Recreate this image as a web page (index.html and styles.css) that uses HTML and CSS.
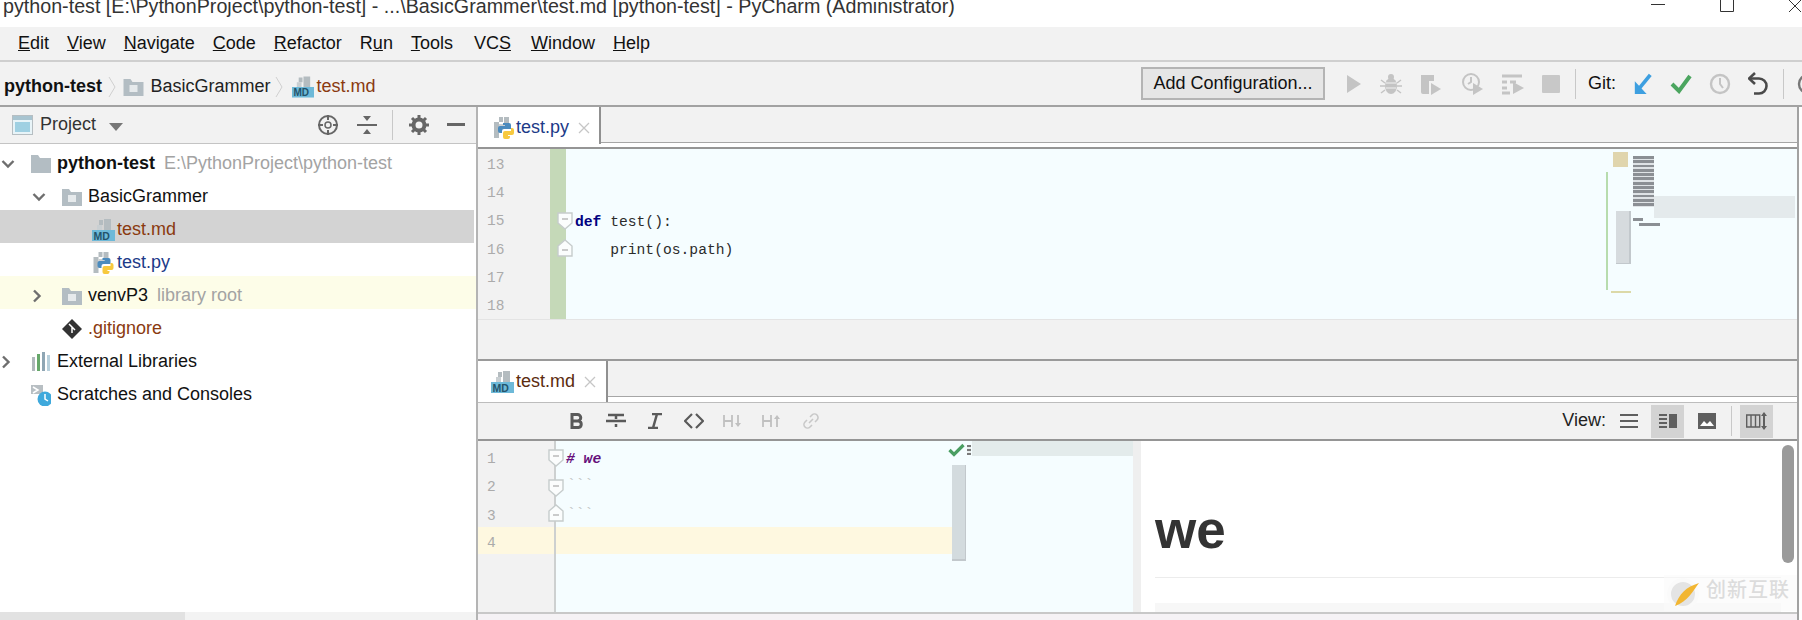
FILE: index.html
```html
<!DOCTYPE html>
<html lang="en">
<head>
<meta charset="utf-8">
<title>PyCharm</title>
<link rel="stylesheet" href="styles.css">
</head>
<body>
<svg class="defs" width="0" height="0">
  <symbol id="folder" viewBox="0 0 20 18"><path d="M0 1h7l2 3h11v14H0z" fill="#b3bdc3"/><rect x="6" y="7" width="8" height="7" fill="#e6eaec"/></symbol>
  <symbol id="folder-plain" viewBox="0 0 20 18"><path d="M0 0h7l2 3h11v15H0z" fill="#b3bdc3"/></symbol>
  <symbol id="md" viewBox="0 0 23 22"><path d="M7 1h4v5H7zM12 0h7v11h-7z" fill="#b4bcc0"/><path d="M5 6h5v5H5z" fill="#c9cfd2"/><rect y="11" width="23" height="11" fill="#6db9d8"/><text x="1.500" y="20.500" class="md-label">MD</text></symbol>
  <symbol id="py" viewBox="0 0 20 22"><path d="M5 0h4v5H5zM10 0h5v7h-5zM0 5h5v16H0z" fill="#b4bcc0"/><path d="M5 7h6v4H5z" fill="#c9cfd2"/><path d="M9 6h6a2 2 0 0 1 2 2v4h-7a2 2 0 0 0-2 2v2H6a2 2 0 0 1-2-2v-3a2 2 0 0 1 2-2h5V8H9z" fill="#4b8bbe"/><path d="M17 11h1a2 2 0 0 1 2 2v3a2 2 0 0 1-2 2h-4v1h2v1a2 2 0 0 1-2 2h-3a2 2 0 0 1-2-2v-4a2 2 0 0 1 2-2h6z" fill="#f7c93e"/></symbol>
  <symbol id="chev-d" viewBox="0 0 14 10"><path d="M1.500 2l5.500 5.500L12.500 2" fill="none" stroke="#6e6e6e" stroke-width="2.400"/></symbol>
  <symbol id="chev-r" viewBox="0 0 10 14"><path d="M2 1.500L7.500 7 2 12.500" fill="none" stroke="#6e6e6e" stroke-width="2.400"/></symbol>
  <symbol id="fold-open" viewBox="0 0 16 18"><path d="M1 1h14v10l-7 6-7-6z" fill="#fbfdfd" stroke="#c6cccc" stroke-width="1.400"/><path d="M5 7h6" stroke="#b5b5b5" stroke-width="1.400"/></symbol>
  <symbol id="fold-close" viewBox="0 0 16 18"><path d="M1 17h14V7L8 1 1 7z" fill="#fbfdfd" stroke="#c6cccc" stroke-width="1.400"/><path d="M5 11h6" stroke="#b5b5b5" stroke-width="1.400"/></symbol>
</svg>

<header class="titlebar">
  <span class="title-text">python-test [E:\PythonProject\python-test] - ...\BasicGrammer\test.md [python-test] - PyCharm (Administrator)</span>
  <div class="winbtns">
    <svg width="14" height="12" viewBox="0 0 14 12"><path d="M0 4.500h14" stroke="#333" stroke-width="1"/></svg>
    <svg width="14" height="12" viewBox="0 0 14 12"><path d="M.5 0v11.500h13V0" fill="none" stroke="#333"/></svg>
    <svg width="14" height="12" viewBox="0 0 14 12"><path d="M0 0l12 12M12 0L0 12" stroke="#333"/></svg>
  </div>
</header>

<nav class="menubar">
  <span><u>E</u>dit</span><span><u>V</u>iew</span><span><u>N</u>avigate</span><span><u>C</u>ode</span><span><u>R</u>efactor</span><span>R<u>u</u>n</span><span><u>T</u>ools</span><span class="m-vcs">VC<u>S</u></span><span><u>W</u>indow</span><span><u>H</u>elp</span>
</nav>

<div class="navbar">
  <div class="crumbs">
    <b>python-test</b>
    <svg class="crumb-sep" width="8" height="22" viewBox="0 0 8 22"><path d="M1 1l6 10-6 10" fill="none" stroke="#d0d0d0"/></svg>
    <svg class="ic20" width="21" height="18"><use href="#folder"/></svg>
    <span class="crumb-name">BasicGrammer</span>
    <svg class="crumb-sep s2" width="8" height="22" viewBox="0 0 8 22"><path d="M1 1l6 10-6 10" fill="none" stroke="#d0d0d0"/></svg>
    <svg class="crumb-file" width="22" height="22"><use href="#md"/></svg>
    <span class="vcs-ignored">test.md</span>
  </div>
  <div class="run-tools">
    <button class="config">Add Configuration...</button>
    <svg class="rt" width="18" height="22" viewBox="0 0 18 22"><path d="M2 2l14 9-14 9z" fill="#c4c4c4"/></svg>
    <svg class="rt" width="22" height="22" viewBox="0 0 22 22"><ellipse cx="11" cy="13" rx="6" ry="8" fill="#c4c4c4"/><circle cx="11" cy="4" r="3" fill="#c4c4c4"/><path d="M1 7l4 3M21 7l-4 3M0 13h5M22 13h-5M1 20l4-3M21 20l-4-3" stroke="#c4c4c4" stroke-width="1.500"/><path d="M6 10h10M6 15h10" stroke="#f2f2f2" stroke-width="1.200"/></svg>
    <svg class="rt" width="24" height="22" viewBox="0 0 24 22"><path d="M2 2h13v6h-5v13H4a2 2 0 0 1-2-2z" fill="#c4c4c4"/><path d="M12 10l10 6-10 6z" fill="#c4c4c4"/></svg>
    <svg class="rt" width="24" height="24" viewBox="0 0 24 24"><circle cx="11" cy="10" r="8" fill="none" stroke="#c4c4c4" stroke-width="2"/><path d="M11 5v5l-3 2" fill="none" stroke="#c4c4c4" stroke-width="2"/><path d="M13 11l10 6-10 6z" fill="#c4c4c4"/></svg>
    <svg class="rt" width="24" height="22" viewBox="0 0 24 22"><path d="M1 3h20M1 9h5M9 9h6M1 15h5M1 20h8" stroke="#c4c4c4" stroke-width="3"/><path d="M12 9l11 6-11 6z" fill="#c4c4c4"/></svg>
    <svg class="rt" width="18" height="18" viewBox="0 0 18 18"><rect width="18" height="18" rx="1" fill="#c8c8c8"/></svg>
    <i class="vsep"></i>
    <span class="git-label">Git:</span>
    <svg class="rt" width="20" height="22" viewBox="0 0 22 24"><path d="M19 2L6 18" stroke="#3d9fe0" stroke-width="4"/><path d="M2 9v14h13z" fill="#3d9fe0"/></svg>
    <svg class="rt" width="22" height="20" viewBox="0 0 22 20"><path d="M2 10l7 7L20 2" fill="none" stroke="#4ba55f" stroke-width="4"/></svg>
    <svg class="rt" width="22" height="22" viewBox="0 0 22 22"><circle cx="11" cy="11" r="9" fill="none" stroke="#c4c4c4" stroke-width="2.400"/><path d="M11 5v6l3 4" fill="none" stroke="#c4c4c4" stroke-width="2"/></svg>
    <svg class="rt" width="20" height="24" viewBox="0 0 20 24"><path d="M7 1L1 6.500 7 12" fill="none" stroke="#4a4a4a" stroke-width="2.600"/><path d="M2 6.500h9a7 7 0 0 1 0 15H6" fill="none" stroke="#4a4a4a" stroke-width="2.600"/></svg>
    <i class="vsep"></i>
    <svg class="rt" width="14" height="24" viewBox="0 0 14 24"><circle cx="12" cy="12" r="9" fill="none" stroke="#777" stroke-width="2.400"/></svg>
  </div>
</div>

<main class="workspace">
  <aside class="project">
    <div class="project-head">
      <svg class="proj-ic" width="21" height="20" viewBox="0 0 21 20"><rect x=".5" y=".5" width="20" height="19" fill="#e8f4f8" stroke="#b6bec2"/><rect x="1" y="1" width="19" height="4" fill="#a8c4d0"/><rect x="3" y="7" width="15" height="10" fill="#9fd0e2"/></svg>
      <span class="proj-label">Project</span>
      <svg class="proj-arrow" width="14" height="8" viewBox="0 0 14 8"><path d="M0 0h14L7 8z" fill="#777"/></svg>
      <div class="head-tools">
        <svg width="22" height="22" viewBox="0 0 22 22"><circle cx="11" cy="11" r="9" fill="none" stroke="#666" stroke-width="2"/><circle cx="11" cy="11" r="3" fill="none" stroke="#666" stroke-width="1.500"/><path d="M11 1v5M11 16v5M1 11h5M16 11h5" stroke="#666" stroke-width="2"/></svg>
        <svg width="20" height="22" viewBox="0 0 20 22"><path d="M0 11h20" stroke="#666" stroke-width="2"/><path d="M6 2h8l-4 5zM6 20h8l-4-5z" fill="#666"/></svg>
        <i class="vsep short"></i>
        <svg width="20" height="20" viewBox="0 0 20 20"><circle cx="10" cy="10" r="5.500" fill="none" stroke="#666" stroke-width="4"/><path d="M10 0v4M10 16v4M0 10h4M16 10h4M3 3l3 3M14 14l3 3M17 3l-3 3M6 14l-3 3" stroke="#666" stroke-width="3"/></svg>
        <svg width="18" height="4" viewBox="0 0 18 4"><rect width="18" height="3" fill="#666"/></svg>
      </div>
    </div>
    <div class="tree">
      <div class="row"><svg class="chev" width="14" height="10"><use href="#chev-d"/></svg><svg class="ic" width="20" height="18"><use href="#folder-plain"/></svg><b>python-test</b><span class="hint">E:\PythonProject\python-test</span></div>
      <div class="row d1"><svg class="chev" width="14" height="10"><use href="#chev-d"/></svg><svg class="ic" width="20" height="18"><use href="#folder"/></svg><span>BasicGrammer</span></div>
      <div class="row d2 selected"><svg class="ic-file" width="23" height="22"><use href="#md"/></svg><span class="vcs-ignored">test.md</span></div>
      <div class="row d2"><svg class="ic-file" width="23" height="22"><use href="#py"/></svg><span class="vcs-py">test.py</span></div>
      <div class="row d1 lib"><svg class="chev chev-r" width="10" height="14"><use href="#chev-r"/></svg><svg class="ic" width="20" height="18"><use href="#folder"/></svg><span>venvP3</span><span class="hint">library root</span></div>
      <div class="row d3"><svg class="ic" width="20" height="20" viewBox="0 0 20 20"><path d="M10 0l10 10-10 10L0 10z" fill="#333"/><path d="M7 5l6 6M10 8v6" stroke="#fff" stroke-width="1.500"/></svg><span class="vcs-ignored">.gitignore</span></div>
      <div class="row"><svg class="chev chev-r" width="10" height="14"><use href="#chev-r"/></svg><svg class="ic" width="20" height="20" viewBox="0 0 20 20"><path d="M1 5h3v14H1z" fill="#b0b8bc"/><path d="M6 2h3v17H6z" fill="#66a86a"/><path d="M11 0h3v19h-3z" fill="#8fa6b4"/><path d="M16 3h3v16h-3z" fill="#b8d0dc"/></svg><span>External Libraries</span></div>
      <div class="row d0"><svg class="ic" width="20" height="22" viewBox="0 0 20 22"><path d="M0 1h12v9H0z" fill="#b8bfc3"/><path d="M2 3l5 3-5 3" fill="none" stroke="#fff" stroke-width="1.500"/><circle cx="14" cy="15" r="7.500" fill="#3fa9dc"/><path d="M14 10v5l3 2" fill="none" stroke="#fff" stroke-width="1.500"/></svg><span>Scratches and Consoles</span></div>
    </div>
    <div class="hscroll"><i></i></div>
  </aside>

  <section class="editors">
    <div class="tabs">
      <div class="tab"><svg class="tab-ic" width="20" height="22"><use href="#py"/></svg><span class="vcs-py">test.py</span><svg class="tab-x" width="12" height="12" viewBox="0 0 12 12"><path d="M1 1l10 10M11 1L1 11" stroke="#c6c6c6" stroke-width="1.300"/></svg></div>
    </div>
    <div class="tab-strip"></div>
    <div class="editor-one">
      <div class="gutter g1">
        <div class="ln">13</div><div class="ln">14</div><div class="ln">15</div><div class="ln">16</div><div class="ln">17</div><div class="ln">18</div>
      </div>
      <div class="change-bar"></div>
      <div class="code c1">
        <div class="ln">&nbsp;</div><div class="ln">&nbsp;</div>
        <div class="ln"><b class="kw">def</b> test():</div>
        <div class="ln">    print(os.path)</div>
      </div>
      <svg class="fold f1" width="16" height="18"><use href="#fold-open"/></svg>
      <svg class="fold f2" width="16" height="18"><use href="#fold-close"/></svg>
      <i class="mm-tan"></i><i class="mm-green"></i><i class="mm-strip"></i><i class="mm-bars"></i><i class="mm-b1"></i><i class="mm-b2"></i><i class="mm-thumb"></i><i class="mm-foot"></i>
    </div>
    <div class="split-gap"></div>

    <div class="tabs second">
      <div class="tab"><svg class="tab-ic" width="23" height="22"><use href="#md"/></svg><span class="vcs-md">test.md</span><svg class="tab-x" width="12" height="12" viewBox="0 0 12 12"><path d="M1 1l10 10M11 1L1 11" stroke="#c6c6c6" stroke-width="1.300"/></svg></div>
    </div>
    <div class="tab-strip second"></div>
    <div class="md-tools">
      <div class="md-format">
        <span class="fbtn"><svg width="14" height="16" viewBox="0 0 14 16"><path d="M2 1.500h5.500a3.200 3.200 0 0 1 0 6.500H2zM2 8h6.500a3.300 3.300 0 0 1 0 6.500H2z" fill="none" stroke="#5a5a5a" stroke-width="3"/></svg></span>
        <span class="fbtn"><svg width="20" height="16" viewBox="0 0 20 16"><path d="M2 2h16M10 2v4M0 8h20M10 11v3" stroke="#5a5a5a" stroke-width="2.500"/></svg></span>
        <span class="fbtn"><svg width="14" height="16" viewBox="0 0 14 16"><path d="M4 1h10M0 15h10M9 1L5 15" stroke="#5a5a5a" stroke-width="2.500"/></svg></span>
        <span class="fbtn"><svg width="20" height="16" viewBox="0 0 20 16"><path d="M8 1L1 8l7 7M12 1l7 7-7 7" fill="none" stroke="#5a5a5a" stroke-width="2.200"/></svg></span>
        <span class="fbtn"><svg width="20" height="14" viewBox="0 0 20 14"><path d="M1 1v12M9 1v12M1 7h8M15 1v11" stroke="#c0c0c0" stroke-width="1.800"/><path d="M12 9h6l-3 4z" fill="#c0c0c0"/></svg></span>
        <span class="fbtn"><svg width="20" height="14" viewBox="0 0 20 14"><path d="M1 1v12M9 1v12M1 7h8M15 3v10" stroke="#c0c0c0" stroke-width="1.800"/><path d="M12 5h6l-3-4z" fill="#c0c0c0"/></svg></span>
        <span class="fbtn"><svg width="18" height="18" viewBox="0 0 18 18"><path d="M7 11l4-4M8 5l2-2a3 3 0 0 1 5 5l-2 2M10 13l-2 2a3 3 0 0 1-5-5l2-2" fill="none" stroke="#c8c8c8" stroke-width="1.600"/></svg></span>
      </div>
      <div class="md-view">
        <span class="view-label">View:</span>
        <span class="vbtn"><svg width="18" height="16" viewBox="0 0 18 16"><path d="M0 2h18M0 8h18M0 14h18" stroke="#5f5f5f" stroke-width="2"/></svg></span>
        <span class="vbtn active"><svg width="18" height="16" viewBox="0 0 18 16"><path d="M0 2h8M0 6h8M0 10h8M0 14h8" stroke="#5f5f5f" stroke-width="2"/><rect x="10" y="1" width="8" height="14" fill="#5f5f5f"/></svg></span>
        <span class="vbtn"><svg width="18" height="18" viewBox="0 0 18 18"><rect y="1" width="18" height="16" fill="#5f5f5f"/><path d="M2 14l4-5 3 3 3-3 4 5z" fill="#fff"/></svg></span>
        <i class="vsep tall"></i>
        <span class="vbtn active"><svg width="22" height="20" viewBox="0 0 22 20"><path d="M.7 4h13v12H.7zM5 4v12M9.500 4v12" fill="none" stroke="#5f5f5f" stroke-width="1.400"/><path d="M18 2v16" stroke="#5f5f5f" stroke-width="2"/><path d="M15 5h6l-3-4zM15 15h6l-3 4z" fill="#5f5f5f"/></svg></span>
      </div>
    </div>
    <div class="md-split">
      <div class="md-source">
        <div class="gutter g2">
          <div class="ln2">1</div><div class="ln2">2</div><div class="ln2">3</div><div class="ln2 hl">4</div>
        </div>
        <div class="code c2">
          <div class="ln2 head-line"><b class="heading"># we</b></div>
          <div class="ln2 faint">```</div>
          <div class="ln2 faint">```</div>
          <div class="ln2 hl code-hl">&nbsp;</div>
        </div>
        <svg class="fold f3" width="16" height="18"><use href="#fold-open"/></svg>
        <svg class="fold f4" width="16" height="18"><use href="#fold-open"/></svg>
        <svg class="fold f5" width="16" height="18"><use href="#fold-close"/></svg>
        <i class="m2-strip"></i>
        <svg class="m2-check" width="17" height="14" viewBox="0 0 17 14"><path d="M1.500 7l4.500 4.500L15.500 2" fill="none" stroke="#4a9e62" stroke-width="3.200"/></svg>
        <i class="m2-dots"></i>
        <i class="m2-thumb"></i>
      </div>
      <div class="md-divider"></div>
      <article class="preview">
        <h1>we</h1>
        <div class="pre-block"></div>
        <i class="pv-scroll"></i>
      </article>
    </div>
    <div class="editors-foot"></div>
  </section>
</main>

<div class="watermark">
  <svg width="34" height="34" viewBox="0 0 34 34"><circle cx="17" cy="17" r="14" fill="#e4e4e4" stroke="#fafafa" stroke-width="4"/><path d="M9 29C13 17 20 10 33 6 27 14 22 24 9 29z" fill="#f2b632"/></svg>
  <span>创新互联</span>
</div>
</body>
</html>
```

FILE: styles.css
```css
* { box-sizing: border-box; }
html, body { margin: 0; padding: 0; }
body {
  width: 1802px;
  height: 620px;
  overflow: hidden;
  position: relative;
  background: #fff;
  color: #111;
  font: 18px/1.2 "Liberation Sans", Arial, sans-serif;
}
.defs { position: absolute; }
svg { display: block; flex: none; }
.md-label { font: bold 10.500px "Liberation Sans", sans-serif; fill: #23536b; }

.titlebar {
  height: 27px;
  display: flex;
  justify-content: space-between;
  overflow: hidden;
  padding-left: 3px;
  color: #333;
}
.title-text { font-size: 19.700px; line-height: 12px; white-space: nowrap; }
.winbtns { display: flex; gap: 55px; margin-right: -1px; }

.menubar {
  height: 35px;
  display: flex;
  align-items: center;
  gap: 18px;
  padding: 0 0 0 18px;
  background: #f2f2f2;
  border-bottom: 2px solid #cfcfcf;
}
.m-vcs { margin-left: 3px; margin-right: 2px; }

.navbar {
  height: 45px;
  display: flex;
  justify-content: space-between;
  align-items: center;
  background: #f2f2f2;
  border-bottom: 2px solid #a2a2a2;
  padding-left: 4px;
}
.crumbs { display: flex; align-items: center; padding-top: 6px; }
.crumb-sep { margin: 0 2px 0 6px; }
.crumb-sep.s2 { margin-left: 4px; }
.ic20 { margin: 0 6.500px 0 5px; }
.crumb-file { margin: 0 3px 0 7px; }
.crumb-name { color: #222; }
.run-tools { display: flex; align-items: center; margin-right: -25px; }
.config {
  width: 184px;
  height: 33px;
  margin-right: 20px;
  padding: 0;
  background: #e6e6e6;
  border: 2px solid #b4b4b4;
  font: 18px "Liberation Sans", sans-serif;
  color: #111;
}
.rt { margin-right: 17px; }
.vsep { display: block; width: 1px; height: 30px; background: #c8c8c8; flex: none; }
.run-tools .vsep { margin: 0 12px 0 -2px; }
.git-label { margin-right: 17px; }

.vcs-ignored { color: #8a3a10; }
.vcs-py { color: #1c3a88; }
.vcs-md { color: #5c2c10; }

.workspace { display: flex; height: 513px; }
.project {
  width: 478px;
  flex: none;
  display: flex;
  flex-direction: column;
  border-right: 2px solid #b4b4b4;
}
.project-head {
  height: 37px;
  flex: none;
  display: flex;
  align-items: center;
  padding-left: 12px;
  background: #f2f2f2;
  border-bottom: 1px solid #c4c4c4;
}
.proj-label { margin-left: 7px; color: #333; }
.proj-arrow { margin-left: 13px; margin-top: 3px; }
.head-tools { display: flex; align-items: center; margin-left: auto; padding-right: 11px; gap: 18px; }
.vsep.short { height: 30px; margin: 0 -2px 0 -3px; }

.tree { flex: 1; }
.row { display: flex; align-items: center; height: 33px; padding-top: 6px; }
.chev { margin: 0 16px 0 1px; }
.chev-r { margin: 0 20px 0 1px; }
.ic { margin-right: 6px; }
.ic-file { margin-right: 2px; }
.row.d0 { padding-left: 31px; }
.row.d1 { padding-left: 31px; }
.row.d2 { padding-left: 92px; }
.row.d3 { padding-left: 62px; }
.selected { background: #d3d3d3; margin-right: 2px; }
.lib { background: #fdfde8; }
.hint { margin-left: 9px; color: #a3a3a3; }
.hscroll { height: 8px; flex: none; background: #f3f3f3; }
.hscroll i { display: block; width: 185px; height: 8px; background: #e2e2e2; }

.editors {
  flex: 1;
  display: flex;
  flex-direction: column;
  margin-right: 3px;
  border-right: 2px solid #a2a2a2;
  min-width: 0;
}
.tabs {
  height: 36px;
  flex: none;
  display: flex;
  background: #f2f2f2;
  border-bottom: 1px solid #a6a6a6;
}
.tab {
  display: flex;
  align-items: center;
  width: 123px;
  height: 37px;
  padding: 4px 0 0 16px;
  background: #fff;
  border-right: 2px solid #909090;
  position: relative;
  z-index: 1;
}
.tab-ic { margin-right: 2px; }
.tab-x { margin-left: 9px; }
.tab-strip { height: 4px; flex: none; background: #fff; }

.editor-one {
  height: 172px;
  flex: none;
  display: flex;
  position: relative;
  border-top: 2px solid #959595;
  background: #f5fdff;
  overflow: hidden;
}
.gutter { background: #f2f2f2; flex: none; font: 14.500px/28.200px "Liberation Mono", monospace; color: #ababab; }
.g1 { width: 72px; padding: 2px 0 0 9px; }
.change-bar { width: 16px; background: #c5d9b8; flex: none; }
.code { font: 14.670px "Liberation Mono", monospace; color: #2b2b2b; flex: 1; }
.code .ln, .code .ln2 { white-space: pre; }
.c1 { padding: 2.500px 0 0 9px; }
.ln { height: 28.200px; line-height: 28.200px; }
.kw { color: #000080; }
.heading { color: #660e7a; font-style: italic; }
.fold { position: absolute; }
.f1 { left: 79px; top: 63px; }
.f2 { left: 79px; top: 90px; }

.mm-tan { position: absolute; left: 1135px; top: 3px; width: 15px; height: 15px; background: #e0d5ad; }
.mm-green { position: absolute; left: 1128px; top: 23px; width: 2px; height: 118px; background: #b7dcae; }
.mm-strip { position: absolute; left: 1176px; top: 47px; right: 2px; height: 22px; background: #e4eaec; }
.mm-bars { position: absolute; left: 1155px; top: 7px; width: 21px; height: 51px; background: repeating-linear-gradient(180deg, #8b8f94 0 2.800px, #dfe3e6 2.800px 4.300px); }
.mm-b1 { position: absolute; left: 1155px; top: 69px; width: 10px; height: 3px; background: #8b8f94; }
.mm-b2 { position: absolute; left: 1161px; top: 74px; width: 21px; height: 3px; background: #8b8f94; }
.mm-thumb { position: absolute; left: 1138px; top: 62px; width: 15px; height: 53px; background: #d6dbde; border-right: 2px solid #c2c8cc; border-bottom: 1px solid #c2c8cc; }
.mm-foot { position: absolute; left: 1133px; top: 142px; width: 20px; height: 2px; background: #dcd9a8; }

.split-gap { height: 40px; flex: none; background: #f2f2f2; border-top: 1px solid #e4e4e4; }

.tabs.second { border-top: 2px solid #9a9a9a; height: 38px; }
.tabs.second .tab { width: 130px; height: 41px; padding: 1px 0 0 13px; }
.tab-strip.second { height: 6px; border-bottom: 1px solid #bdbdbd; }
.md-tools {
  height: 38px;
  flex: none;
  display: flex;
  justify-content: space-between;
  align-items: center;
  background: #f2f2f2;
  border-bottom: 2px solid #959595;
}
.md-format { display: flex; align-items: center; padding-left: 79.500px; }
.fbtn { width: 39px; display: flex; justify-content: center; }
.md-view { display: flex; align-items: center; padding-right: 21px; }
.view-label { margin-right: 3px; color: #222; }
.vbtn { width: 33px; height: 33px; display: flex; align-items: center; justify-content: center; margin: 0 3px; }
.vbtn.active { background: #d3d3d3; }
.vsep.tall { height: 30px; margin: 0 5px; }

.md-split { height: 171px; flex: none; display: flex; overflow: hidden; }
.md-source { width: 655px; flex: none; display: flex; position: relative; background: #f5fdff; overflow: hidden; }
.g2 { width: 78px; padding-top: 4px; border-right: 2px solid #cdd0d0; }
.c2 { padding-top: 4px; }
.ln2 { height: 28.400px; line-height: 28.400px; padding-left: 9px; }
.head-line { padding-left: 10px; }
.c2 .faint { color: #c4c8c8; padding-left: 11px; line-height: 24px; }
.hl { background: #fef8e0; height: 27px; margin-top: -3px; line-height: 33px; }
.code-hl { margin-right: 181px; padding: 0; }
.f3 { left: 70px; top: 8px; }
.f4 { left: 70px; top: 38px; }
.f5 { left: 70px; top: 63px; }
.m2-strip { position: absolute; left: 494px; top: 0; right: 0; height: 15px; background: #e3ebeb; }
.m2-check { position: absolute; left: 470px; top: 2px; }
.m2-dots { position: absolute; left: 489px; top: 4px; width: 4px; height: 10px; background: repeating-linear-gradient(180deg, #7a7a7a 0 2px, #e8eeee 2px 4px); }
.m2-thumb { position: absolute; left: 474px; top: 24px; width: 14px; height: 96px; background: rgba(203, 210, 214, .8); border-right: 1px solid #c2c8cc; border-bottom: 2px solid #c2c8cc; }
.md-divider { width: 8px; flex: none; background: #efefef; }
.preview { flex: 1; padding: 59px 0 0 14px; position: relative; background: #fff; }
.preview h1 { margin: 0 16px 0 0; font: bold 53px/60px "Liberation Sans", sans-serif; color: #333; padding-bottom: 17px; border-bottom: 1px solid #ececec; }
.pre-block { height: 30px; margin: 25px 16px 0 0; background: #f7f7f7; }
.pv-scroll { position: absolute; left: 641px; top: 4px; width: 12px; height: 118px; border-radius: 6px; background: #9a9a9a; }
.editors-foot { flex: 1; background: #f5f2f5; border-top: 2px solid #c8c8c8; }

.watermark {
  position: absolute;
  left: 1664px;
  top: 575px;
  width: 133px;
  height: 36px;
  padding-left: 2px;
  display: flex;
  align-items: center;
  gap: 6px;
  background: rgba(250, 250, 250, .6);
}
.watermark svg { margin-top: 1px; }
.watermark span { font: 500 20px "Noto Sans CJK SC", sans-serif; color: #dcdcdc; letter-spacing: 1px; white-space: nowrap; margin-top: -10px; }
```
